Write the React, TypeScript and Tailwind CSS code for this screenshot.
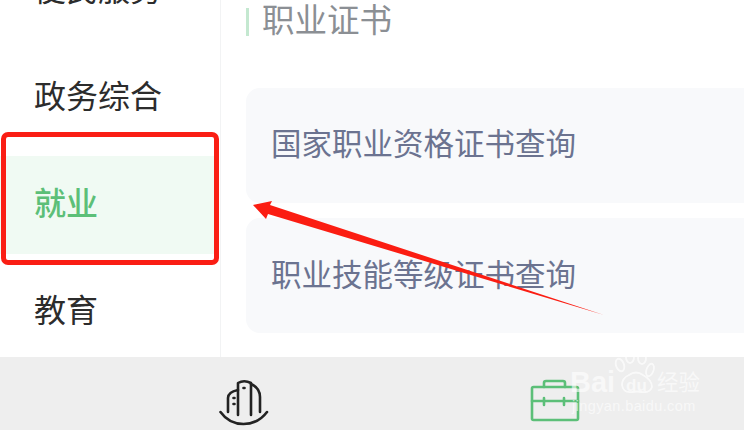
import React from "react";

const cjk = { fontFamily: '"Noto Sans CJK SC", sans-serif' };

function CityIcon() {
  return (
    <svg width="50" height="48" viewBox="0 0 50 48" fill="none" stroke="#222" strokeWidth="2.6" strokeLinecap="round" strokeLinejoin="round">
      <path d="M9 34 V20 Q9 14 19 12" />
      <path d="M19 37 V5 Q25 1.5 32 5 V37" />
      <path d="M32 6 Q41 10 41 19 V34" />
      <path d="M14.5 20 h1 M14.5 26 h1" strokeWidth="2.6" />
      <path d="M24.5 10 h1" strokeWidth="2.6" />
      <path d="M1.5 34 Q10 46 24.5 46 Q39 46 48 34" />
    </svg>
  );
}

function CaseIcon() {
  return (
    <svg width="50" height="44" viewBox="0 0 50 44" fill="none" stroke="#5cbf78" strokeWidth="2.6" strokeLinecap="round" strokeLinejoin="round">
      <rect x="2" y="9" width="46" height="33" rx="1.5" />
      <path d="M14 9 V5 Q14 3 16 3 H33 Q35 3 35 5 V9" />
      <path d="M2 23 H48" />
      <path d="M14 20 V27 M34 20 V27" />
    </svg>
  );
}

function Paw() {
  return (
    <svg width="42" height="48" viewBox="0 0 42 48" fill="none" stroke="#ffffff" strokeWidth="1.8" opacity="0.7">
      <ellipse cx="6" cy="15" rx="4" ry="6.5" transform="rotate(-20 6 15)" />
      <ellipse cx="16" cy="7" rx="4" ry="6" />
      <ellipse cx="28" cy="8" rx="4" ry="6" />
      <ellipse cx="36" cy="20" rx="3.5" ry="6.5" transform="rotate(20 36 20)" />
      <path d="M8 35 Q8 28 15 25 Q22 20 29 25 Q38 30 38 37 Q36 43 28 42 Q23 41 18 42 Q9 43 8 35 Z" />
    </svg>
  );
}

function Card({ text, pad }: { text: string; pad: string }) {
  return (
    <div className={"h-[115px] rounded-l-[14px] bg-[#f8f9fb] flex items-center pl-[25px] text-[30.5px] leading-none text-[#6b7390] whitespace-nowrap " + pad}>
      {text}
    </div>
  );
}

function SideItem({ text, active }: { text: string; active?: boolean }) {
  return (
    <div className={"h-[98px] mb-[9px] flex items-center pl-[34px] pb-[8px] text-[32px] leading-none whitespace-nowrap " + (active ? "bg-[#f0faf3] text-[#5cbf78] font-medium mr-[6px]" : "text-[#2c2c2c]")}>
      {text}
    </div>
  );
}

export default function App() {
  return (
    <div className="relative w-[744px] h-[430px] overflow-hidden bg-white flex flex-col" style={cjk}>
      <div className="h-[357px] flex overflow-hidden">
        <div className="w-[221px] shrink-0 border-r border-[#f2f3f4] -mt-[58px]">
          <SideItem text="便民服务" />
          <SideItem text="政务综合" />
          <SideItem text="就业" active />
          <SideItem text="教育" />
        </div>
        <div className="flex-1 pl-[25px] min-w-0">
          <div className="flex items-center h-[28px] mt-[8px] mb-[52px] text-[32.5px] leading-none text-[#8b8f94] whitespace-nowrap">
            <div className="w-[3px] h-[28px] bg-[#c4e8d0] mr-[14px]" />
            <span className="mb-[8px] -ml-[1px]">职业证书</span>
          </div>
          <div className="flex flex-col gap-[15px]">
            <Card text="国家职业资格证书查询" pad="pb-[6px]" />
            <Card text="职业技能等级证书查询" pad="pb-[4px]" />
          </div>
        </div>
      </div>
      <div className="flex-1 bg-[#eeeeee] flex items-center">
        <div className="ml-[219px] mt-[17px]"><CityIcon /></div>
        <div className="ml-[261px] mt-[13px]"><CaseIcon /></div>
      </div>

      {/* annotation: red box */}
      <div className="absolute left-[1px] top-[132px] w-[218px] h-[133px] border-[5px] border-[#fa1e14] rounded-[7px]" />

      {/* annotation: arrow */}
      <svg className="absolute left-0 top-0" width="744" height="430" viewBox="0 0 744 430">
        <polygon points="253,205 272,201 270,205 604,315 268,214 266,219" fill="#fb1d12" />
      </svg>

      {/* watermark */}
      <div className="absolute left-[570px] top-[350px] w-[174px] h-[80px] text-white" style={{ fontFamily: '"Liberation Sans", sans-serif' }}>
        <div className="absolute left-0 top-[18px] text-[29px] leading-none font-bold opacity-60">Bai</div>
        <div className="absolute left-[44px] top-0"><Paw /></div>
        <div className="absolute left-[56px] top-[27px] text-[17px] leading-none font-bold opacity-60">du</div>
        <div className="absolute left-[87px] top-[20px] text-[21.5px] leading-none opacity-60 whitespace-nowrap" style={cjk}>经验</div>
        <div className="absolute left-[2px] top-[49px] text-[14.5px] leading-none tracking-[0.4px] opacity-60 whitespace-nowrap">jingyan.baidu.com</div>
      </div>
    </div>
  );
}
